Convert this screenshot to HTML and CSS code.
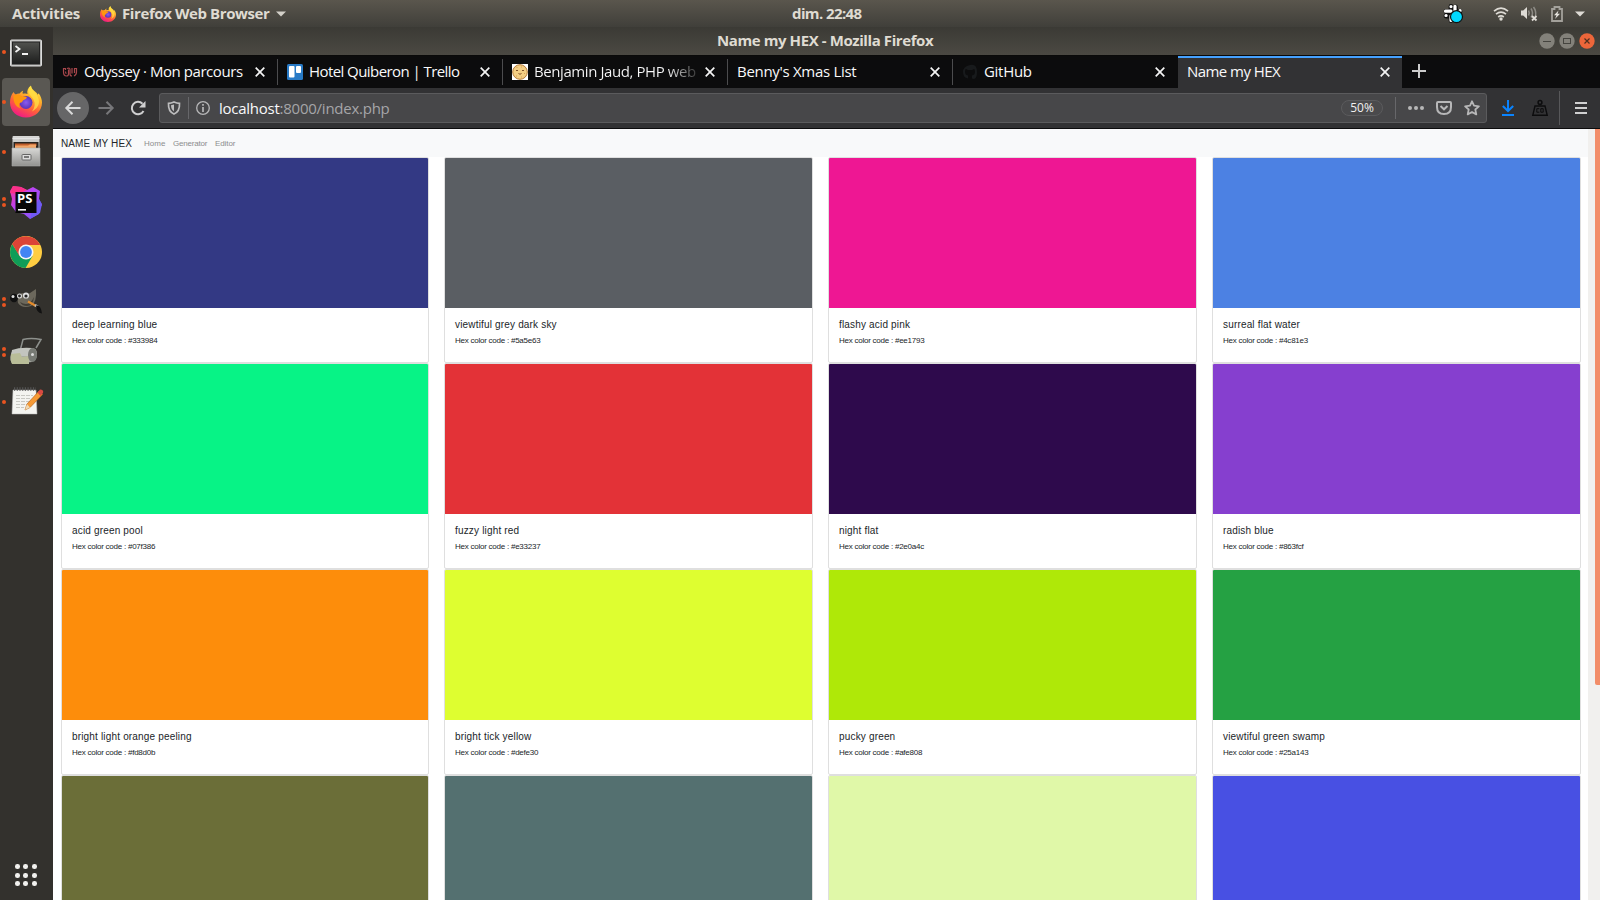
FILE: index.html
```html
<!DOCTYPE html>
<html lang="fr">
<head>
<meta charset="utf-8">
<title>Name my HEX</title>
<link rel="stylesheet" href="styles.css">
</head>
<body>
<svg class="defs" width="0" height="0">
  <defs>
    <linearGradient id="flame" x1="0.8" y1="0" x2="0.3" y2="1"><stop offset="0" stop-color="#fff44f"/><stop offset=".35" stop-color="#ffb02a"/><stop offset=".65" stop-color="#ff5f3a"/><stop offset="1" stop-color="#f0168a"/></linearGradient>
    <radialGradient id="globe"><stop offset="0" stop-color="#8a5cf0"/><stop offset="1" stop-color="#5a34b8"/></radialGradient>
    <linearGradient id="metal" x1="0" y1="0" x2="0" y2="1"><stop offset="0" stop-color="#d8d8d6"/><stop offset="1" stop-color="#92928f"/></linearGradient>
    <linearGradient id="screen" x1="0" y1="0" x2="0" y2="1"><stop offset="0" stop-color="#51524f"/><stop offset="1" stop-color="#1d1e1d"/></linearGradient>
    <linearGradient id="storm" x1="0" y1="0" x2="1" y2="1"><stop offset="0" stop-color="#ff318c"/><stop offset=".4" stop-color="#b845f5"/><stop offset="1" stop-color="#765af8"/></linearGradient>
    <symbol id="firefox" viewBox="0 0 32 32">
      <path fill="url(#flame)" d="M3.500 6.500c.6 1 1.300 2 2.400 2.500 1-.6 2.300-1 3.800-.9 1-1.800 2.300-2.600 3.500-2.900-.8 1.500-.7 2.300-.3 3.100 2.100-.5 3.800-.3 4.600.2-.9-3.200.5-6.200 3.500-8.500.3 2.900 2 4.300 4 6.100 1.300 1 2.300 2.100 2.800 3.200l.8-1.500c2.300 3 3.400 6.300 3.400 9.200 0 8.400-6.800 15-16 15S0 25.400 0 17c0-4.200 1.200-7.800 3.500-10.500z"/>
      <circle cx="16" cy="17" r="6.500" fill="url(#globe)"/>
      <path fill="#ff980e" d="M3.500 10c3-1.500 6-1.200 8 .6l4.500.6c1 .2.800 1.400.2 1.900-1.200 1-3 1.300-3.600 2.500-.3 1.800-2.400 1.300-3.200 2.300-.8 1.700.2 3.700 1.800 5C6 22 3 17 3.500 10z"/>
      <path fill="#ffe047" d="M21 1c.5 5 8 7.500 8 15 0 5-3.500 8-7 10 3-4 3.500-8 1.500-12-2-3.500-5-5-5-8.500C18.500 3.500 19.500 2 21 1z" opacity=".75"/>
    </symbol>
    <symbol id="x" viewBox="0 0 10 10"><path d="M.7.7l8.600 8.600M9.300.7L.7 9.300" fill="none" stroke="#f4f4f4" stroke-width="1.700"/></symbol>
  </defs>
</svg>

<header class="topbar">
  <span class="activities">Activities</span>
  <svg class="top-ff" width="16" height="16"><use href="#firefox"/></svg>
  <span class="appname">Firefox Web Browser</span>
  <svg class="caret" width="10" height="6"><path d="M0 .5h10l-5 5z" fill="#d3d0c9"/></svg>
  <span class="clock">dim. 22:48</span>
  <div class="tray">
    <svg class="slack" width="21" height="20" viewBox="0 0 21 20">
      <g stroke="#111" stroke-width="4.800" stroke-linecap="round"><path d="M8 2.500v4M12.500 3v4M3 7.500h4.500M3 12h4M13 7.500h4M8 12v4.500"/></g>
      <g stroke="#fff" stroke-width="3.200" stroke-linecap="round"><path d="M8 2.500v.1M12 2.300v5M2.500 7.200h5.500M3 11.500h.1M17 6.700h.1M8 12v4.500M12 12v1"/></g>
      <circle cx="13.500" cy="12.700" r="6" fill="#00d8ff" stroke="#111" stroke-width="1.200"/>
    </svg>
    <svg class="wifi" width="16" height="14" viewBox="0 0 16 14"><g fill="none" stroke="#dedbd5" stroke-width="1.700"><path d="M1 4.200q7-6 14 0" /><path d="M3 7.200q5-4.200 10 0"/><path d="M5.200 10q2.800-2.300 5.600 0"/></g><circle cx="8" cy="12" r="1.700" fill="#dedbd5"/></svg>
    <svg class="sound" width="18" height="15" viewBox="0 0 18 15"><path d="M1 4.500h2.200L7 1v12L3.200 9.500H1z" fill="#dedbd5"/><path d="M8.500 4.500q1.500 2.500 0 5M11 2.500q3 4.500 0 9M13.500 1q3 4 2 9" fill="none" stroke="#8d8b85" stroke-width="1.500"/><path d="M12 10l4.500 4.500M16.500 10L12 14.500" stroke="#dedbd5" stroke-width="1.800"/></svg>
    <svg class="battery" width="12" height="16" viewBox="0 0 12 16"><path d="M1 3h2.500V1h5v2H11v12H1z" fill="none" stroke="#a3a19b" stroke-width="1.800"/><path d="M7.500 4.500L3 9.200h2.500L4 13l5-5.200H6.500z" fill="#e5e3dd"/></svg>
    <svg class="caret2" width="10" height="6"><path d="M0 .5h10l-5 5z" fill="#dedbd5"/></svg>
  </div>
</header>

<div class="desktop">
<aside class="dock">
  <div class="app"><i class="run"></i>
    <svg width="34" height="32" viewBox="0 1 34 32"><rect x="1.500" y="5" width="31" height="26" rx="1" fill="#b5b5b3" stroke="#dcdcdc" stroke-width="1"/><rect x="3.500" y="7" width="27" height="22" fill="url(#screen)" stroke="#222"/><path d="M6.500 11l4 3-4 3M13 19h6" fill="none" stroke="#f2f2f2" stroke-width="1.800"/></svg>
  </div>
  <div class="app active"><i class="run"></i><svg class="up" width="32" height="33"><use href="#firefox"/></svg></div>
  <div class="app"><i class="run"></i>
    <svg class="up" width="32" height="34" viewBox="1 0 32 34"><path d="M3.500 3q0-1 1-1h25q1 0 1 1v29h-27z" fill="url(#metal)"/><path d="M3.500 4.500h27" stroke="#e4e4e4"/><path d="M4.500 8h25v8h-25z" fill="#292521"/><path d="M6 9.500h21.500V12H6z" fill="#c25f2c"/><path d="M6 11.500h13l2-1h6V14H6z" fill="#f1a568"/><path d="M3 14h28v18H3z" fill="url(#metal)" stroke="#aaa" stroke-width=".6"/><rect x="13" y="20.500" width="9" height="5.500" rx=".8" fill="#ddd" stroke="#666"/><rect x="15" y="22" width="5" height="2" fill="#777"/></svg>
  </div>
  <div class="app"><i class="run two"></i>
    <svg width="34" height="36" viewBox="0 0 34 36"><path d="M4 2l8 1 6 3 6-3 7 4-1 8 3 6-3 4v5l-9 5-6-5-8-2-5-7 1-6-2-8z" fill="url(#storm)"/><path d="M4 2l8 1 6 3-9 4-8-1z" fill="#fb3188"/><path d="M30 15l3 5-2 9-10 6 2-8z" fill="#6f5af5"/><rect x="6.500" y="8" width="21" height="21" fill="#080808"/><path d="M9 25.800h8" stroke="#fff" stroke-width="1.600"/><text class="ps" x="8" y="19">PS</text></svg>
  </div>
  <div class="app">
    <svg width="32" height="32" viewBox="0 0 32 32"><circle cx="16" cy="16" r="16" fill="#ffcd41"/><path d="M2.200 8A16 16 0 0 0 15.600 32L22.500 20 16 16l-6.500 3.500z" fill="#0f9d58"/><path d="M2.200 8l7.300 12L16 9h14.200A16 16 0 0 0 2.200 8z" fill="#dc4437"/><circle cx="16" cy="16" r="7.500" fill="#f5f5f5"/><circle cx="16" cy="16" r="5.900" fill="#4285f4"/></svg>
  </div>
  <div class="app"><i class="run two"></i>
    <svg width="34" height="30" viewBox="1 0 34 30"><path d="M9 9l5-3 5 2 9-6q1 14-5 17-9 3-13-3z" fill="#6c685c"/><path d="M12 15q9 6 14-5-1 9-7 9-5 0-7-4z" fill="#413e36"/><ellipse cx="6" cy="11" rx="4" ry="4.300" fill="#111"/><circle cx="5" cy="9.500" r="1.500" fill="#dcdcdc"/><circle cx="11.500" cy="9" r="2.500" fill="#dedede"/><circle cx="18" cy="8.500" r="3.100" fill="#dedede"/><circle cx="11.500" cy="9" r="1.400" fill="#222"/><circle cx="18" cy="9" r="1.600" fill="#222"/><path d="M20 14.500l8 4.500" stroke="#e58b2b" stroke-width="2.200"/><path d="M27 18l3 2" stroke="#bbb" stroke-width="2.500"/><path d="M28 18.500q5-1 6 8-6-1-6-8z" fill="#121212"/></svg>
  </div>
  <div class="app"><i class="run two"></i>
    <svg width="34" height="30" viewBox="0 0 34 30"><path d="M11 14l3-11.500q8-2 18 0L27 11" fill="none" stroke="#8d908c" stroke-width="1.500"/><path d="M2 17q1-4 5-4l16-2q5 0 5 6t-5 8l-19 2q-4-3-2-10z" fill="#a9aba6"/><path d="M3 13q8-3 20-2-4 3-4 8L2 19z" fill="#c3c5bf"/><path d="M2 17l9-1 2 4 7-1v8H3q-2-3-1-10z" fill="#b9bd98"/><ellipse cx="23.500" cy="18" rx="4.500" ry="7" fill="#777a74"/><circle cx="23.500" cy="17.500" r="1.500" fill="#ddd"/></svg>
  </div>
  <div class="app"><i class="run"></i>
    <svg class="up" width="34" height="30" viewBox="0 0 34 30"><path d="M4 4h23l1 24H3z" fill="#f4f4f0" stroke="#bbb" stroke-width=".5"/><path d="M5 3h22" stroke="#555" stroke-width="3.500" stroke-dasharray="1.200 1.500"/><path d="M7 9.500h17M7 12.500h14M7 15.500h15M7 18.500h11M7 21.500h8" stroke="#c8c8c2" stroke-width="1" stroke-dasharray="4 1"/><path d="M16 24l2-6L30 5l3.500 3.500L21 21.500z" fill="#f69a35" stroke="#ba661b" stroke-width=".7"/><path d="M16 24l2-6 3 3.500z" fill="#efdab4"/><path d="M28.500 6.500l2.500-3q4 0 3 3.500l-2.500 3z" fill="#d94a42"/></svg>
  </div>
  <div class="allapps"><i></i><i></i><i></i><i></i><i></i><i></i><i></i><i></i><i></i></div>
</aside>

<main class="window">
  <div class="titlebar"><span class="wintitle">Name my HEX - Mozilla Firefox</span>
    <div class="winbtns">
      <svg width="16" height="16"><circle cx="8" cy="8" r="7.700" fill="#83817a"/><path d="M4 8.500h8" stroke="#45443f"/></svg>
      <svg width="16" height="16"><circle cx="8" cy="8" r="7.700" fill="#83817a"/><rect x="4.500" y="5.500" width="7" height="5" fill="none" stroke="#45443f"/></svg>
      <svg width="16" height="16"><circle cx="8" cy="8" r="7.700" fill="#ed663a"/><path d="M5.500 5.500l5 5M10.500 5.500l-5 5" stroke="#51301f" stroke-width="1.200"/></svg>
    </div>
  </div>
  <div class="tabs">
    <div class="tab"><svg class="fav" width="16" height="16" viewBox="0 0 16 16"><path d="M3.500 6V4.500H1.500V8q0 4 3 4 2 0 2-2V5.500M5 4.500q3-1 3 1V10q0 2 2 2M10 4v5.500M12 12q2.500-1 2.500-4V4.500h-2V9M3.500 7.500q0 2 1 2" fill="none" stroke="#a8474c" stroke-width="1.200"/></svg><span class="t1">Odyssey · Mon parcours</span><svg class="close" width="10" height="10"><use href="#x"/></svg></div>
    <div class="tab"><svg class="fav" width="16" height="16"><rect width="16" height="16" rx="1.500" fill="#287ac6"/><rect x="2" y="2" width="5.500" height="11.500" rx="1" fill="#fff"/><rect x="9" y="2" width="5" height="7" rx="1" fill="#fff"/></svg><span class="t2">Hotel Quiberon | Trello</span><svg class="close" width="10" height="10"><use href="#x"/></svg></div>
    <div class="tab"><svg class="fav" width="16" height="16"><path fill="#fff" d="M0 0h16v16H0z"/><circle cx="8" cy="8" r="7.300" fill="#f4ce83" stroke="#b67b38"/><path d="M4 6.500h2M10 6.500h2M6.500 9.500q1.500 1.500 3 0" stroke="#805026" fill="none"/><path d="M4.500 3.500h1M9 3h1M12 9.500h1M4 12h1M9 13h1" stroke="#d8a254"/></svg><span class="t3 fade">Benjamin Jaud, PHP web</span><svg class="close" width="10" height="10"><use href="#x"/></svg></div>
    <div class="tab"><span class="t4">Benny's Xmas List</span><svg class="close" width="10" height="10"><use href="#x"/></svg></div>
    <div class="tab last"><svg class="fav" width="16" height="16"><path d="M6 14.500Q1 13.500 1 8t7-7 7 7-5 6.500v-3q3-.5 3-3.500 0-3-1-3l-2 1H6L4 5Q3 5 3 8t3 3.500z" fill="#181a1c"/></svg><span class="t5">GitHub</span><svg class="close" width="10" height="10"><use href="#x"/></svg></div>
    <div class="tab current"><span class="t6">Name my HEX</span><svg class="close" width="10" height="10"><use href="#x"/></svg></div>
    <svg class="plus" width="14" height="14"><path d="M7 0v14M0 7h14" stroke="#ccc" stroke-width="2"/></svg>
  </div>
  <div class="toolbar">
    <div class="back"><svg width="16" height="16" viewBox="0 0 16 16"><path d="M15.500 8H1.500M7.500 1.700L1.300 8l6.200 6.300" fill="none" stroke="#dadada" stroke-width="2"/></svg></div>
    <svg class="forward" width="16" height="16" viewBox="0 0 16 16"><path d="M.5 8h14M8.500 1.700L14.700 8l-6.200 6.300" fill="none" stroke="#77777a" stroke-width="2"/></svg>
    <svg class="reload" width="16" height="16" viewBox="0 0 16 16"><path d="M13.500 11A6.200 6.200 0 1 1 12.500 3.700" fill="none" stroke="#cfcfd0" stroke-width="2"/><path d="M15.500 1v6.500H9z" fill="#cfcfd0"/></svg>
    <div class="urlbar">
      <svg class="shield" width="14" height="14" viewBox="0 0 14 14"><path d="M7 1q3 1.300 5.500 1.300Q13 10.500 7 13 1 10.500 1.500 2.300 4 2.300 7 1z" fill="none" stroke="#bdbdbe" stroke-width="1.700"/><path d="M7 3.500v7Q4 8.500 4 4.300z" fill="#bdbdbe"/></svg>
      <i class="sep"></i>
      <svg class="info" width="14" height="14"><circle cx="7" cy="7" r="6.300" fill="none" stroke="#b7b7b8" stroke-width="1.300"/><path d="M7 6v5M7 3v1.800" stroke="#b7b7b8" stroke-width="1.700"/></svg>
      <span class="url"><b>localhost</b>:8000/index.php</span>
      <span class="zoom">50%</span>
      <i class="sep end"></i>
      <svg class="dots" width="16" height="4"><g fill="#b7b7b8"><circle cx="2" cy="2" r="2"/><circle cx="8" cy="2" r="2"/><circle cx="14" cy="2" r="2"/></g></svg>
      <svg class="pocket" width="16" height="14" viewBox="0 0 16 14"><path d="M2 1h12q1 0 1 1v4q0 7-7 7T1 6V2q0-1 1-1z" fill="none" stroke="#b7b7b8" stroke-width="2"/><path d="M4.500 5L8 8.300 11.500 5" fill="none" stroke="#b7b7b8" stroke-width="2"/></svg>
      <svg class="star" width="16" height="16" viewBox="0 0 16 16"><path d="M8 1.300l2 4.400 4.900.6-3.600 3.200 1 4.900L8 12l-4.300 2.400 1-4.900L1.100 6.300 6 5.700z" fill="none" stroke="#b7b7b8" stroke-width="1.800" stroke-linejoin="round"/></svg>
    </div>
    <svg class="download" width="12" height="16"><path d="M6 0v11M.8 6L6 11l5.200-5M0 15h12" fill="none" stroke="#0a84ff" stroke-width="2"/></svg>
    <svg class="weight" width="16" height="16" viewBox="0 0 16 16"><circle cx="8" cy="2.500" r="1.900" fill="none" stroke="#0c0c0d" stroke-width="1.500"/><path d="M3 6h10l2.200 9.200H.8z" fill="none" stroke="#0c0c0d" stroke-width="1.400"/><path d="M7.300 8.700H4.800v3.500h2.500M8.800 8.700h2.400v3.500H8.800z" fill="none" stroke="#0c0c0d"/></svg>
    <i class="vline"></i>
    <svg class="menu" width="12" height="12"><path d="M0 1h12M0 6h12M0 11h12" stroke="#d0d0d0" stroke-width="2"/></svg>
  </div>
  <div class="viewport">
    <div class="page">
      <nav class="sitenav"><span class="brand">NAME MY HEX</span><a class="n1">Home</a><a class="n2">Generator</a><a class="n3">Editor</a></nav>
      <section class="grid">
        <article class="card"><div class="swatch c1"></div><div class="body"><h5>deep learning blue</h5><p>Hex color code : #333984</p></div></article>
        <article class="card"><div class="swatch c2"></div><div class="body"><h5>viewtiful grey dark sky</h5><p>Hex color code : #5a5e63</p></div></article>
        <article class="card"><div class="swatch c3"></div><div class="body"><h5>flashy acid pink</h5><p>Hex color code : #ee1793</p></div></article>
        <article class="card"><div class="swatch c4"></div><div class="body"><h5>surreal flat water</h5><p>Hex color code : #4c81e3</p></div></article>
        <article class="card"><div class="swatch c5"></div><div class="body"><h5>acid green pool</h5><p>Hex color code : #07f386</p></div></article>
        <article class="card"><div class="swatch c6"></div><div class="body"><h5>fuzzy light red</h5><p>Hex color code : #e33237</p></div></article>
        <article class="card"><div class="swatch c7"></div><div class="body"><h5>night flat</h5><p>Hex color code : #2e0a4c</p></div></article>
        <article class="card"><div class="swatch c8"></div><div class="body"><h5>radish blue</h5><p>Hex color code : #863fcf</p></div></article>
        <article class="card"><div class="swatch c9"></div><div class="body"><h5>bright light orange peeling</h5><p>Hex color code : #fd8d0b</p></div></article>
        <article class="card"><div class="swatch c10"></div><div class="body"><h5>bright tick yellow</h5><p>Hex color code : #defe30</p></div></article>
        <article class="card"><div class="swatch c11"></div><div class="body"><h5>pucky green</h5><p>Hex color code : #afe808</p></div></article>
        <article class="card"><div class="swatch c12"></div><div class="body"><h5>viewtiful green swamp</h5><p>Hex color code : #25a143</p></div></article>
        <article class="card"><div class="swatch c13"></div></article>
        <article class="card"><div class="swatch c14"></div></article>
        <article class="card"><div class="swatch c15"></div></article>
        <article class="card"><div class="swatch c16"></div></article>
      </section>
    </div>
    <div class="scrollbar"><div class="thumb"></div></div>
  </div>
</main>
</div>
</body>
</html>
```
FILE: styles.css
```css
* { box-sizing: border-box; }
body { margin: 0; width: 1600px; height: 900px; overflow: hidden; display: flex; flex-direction: column; font-family: "Open Sans", "Noto Sans", sans-serif; font-size: 15px; }
.defs { position: absolute; }
svg { display: block; flex: none; overflow: visible; }
span, a { white-space: nowrap; flex: none; }

.topbar { height: 27px; flex: none; display: flex; align-items: center; background: linear-gradient(#5a564d, #403f3a); color: #dfdbd2; font-weight: 700; line-height: 27px; }
.activities { width: 88px; padding-left: 12px; letter-spacing: -.15px; }
.top-ff { margin: 0 6px 0 12px; }
.appname { width: 154px; letter-spacing: -.4px; }
.clock { margin-left: 506px; width: 72px; letter-spacing: -.6px; }
.tray { margin-left: 579px; display: flex; align-items: center; }
.wifi { margin-left: 29px; }
.sound { margin-left: 11px; }
.battery { margin-left: 13px; }
.caret2 { margin-left: 12px; }

.desktop { flex: 1; display: flex; min-height: 0; }
.dock { width: 53px; background: #33312d; padding: 1px 2px 0; display: flex; flex-direction: column; gap: 2px; }
.app { position: relative; height: 48px; width: 48px; flex: none; border-radius: 4px; display: flex; align-items: center; justify-content: center; }
.app .up { margin-bottom: 2px; }
.active { background: #5a5853; }
.run { position: absolute; left: 0; top: 22px; width: 4px; height: 4px; border-radius: 50%; background: #e95420; }
.two { top: 19px; box-shadow: 0 6px #e95420; }
.ps { font: bold 13px "Open Sans", sans-serif; fill: #fff; }
.allapps { margin: auto 0 14px 13px; display: grid; grid-template-columns: repeat(3, 4.600px); gap: 3.900px; }
.allapps i { height: 4.600px; border-radius: 50%; background: #f2f1ef; }

.window { flex: 1; display: flex; flex-direction: column; min-width: 0; }
.titlebar { height: 28px; flex: none; background: linear-gradient(#3b3a35, #4b4943); color: #dfdbd2; font-weight: 700; display: flex; align-items: center; line-height: 26px; }
.wintitle { margin-left: 664px; height: 28px; letter-spacing: -.41px; }
.winbtns { margin-left: auto; padding-right: 5px; display: flex; gap: 4px; }
.tabs { height: 33px; flex: none; background: #0c0c0d; color: #f9f9fa; display: flex; border-top: 1px solid #0a0a0a; }
.tab { width: 225px; flex: none; display: flex; align-items: center; padding: 0 12px 0 9px; border-right: 1px solid transparent; border-image: linear-gradient(transparent 4px, #4c4c4e 4px, #4c4c4e 28px, transparent 28px) 1; }
.tab span { height: 32px; line-height: 30px; }
.tab.last { border-image: none; }
.tab.current { border: 0; width: 224px; background: #323234; box-shadow: inset 0 2px #45a1ff; }
.fav { margin-right: 6px; }
.t1 { letter-spacing: -.44px; }
.t2 { letter-spacing: -.57px; }
.t3 { letter-spacing: -.42px; }
.t4, .t5 { letter-spacing: -.3px; }
.t6 { letter-spacing: -.55px; }
.close { margin-left: auto; }
.tab .fade { background: linear-gradient(90deg, #f9f9fa 82%, #3a3a3a 100%); background-clip: text; -webkit-background-clip: text; color: transparent; }
.plus { margin: 8px 0 0 10px; }

.toolbar { height: 41px; flex: none; background: #323234; border-bottom: 1px solid #0c0c0d; display: flex; align-items: center; }
.back { margin-left: 4px; width: 32px; height: 32px; border-radius: 50%; background: #666667; display: flex; align-items: center; justify-content: center; }
.forward { margin-left: 9px; }
.reload { margin-left: 16px; }
.urlbar { margin-left: 13px; width: 1328px; height: 30px; background: #474749; border: 1px solid #5b5b5d; border-radius: 3px; display: flex; align-items: center; }
.shield { margin-left: 7px; }
.sep { width: 1px; height: 22px; background: #67676a; margin: 0 7px; }
.url { margin-left: 9px; color: #a5a5a8; line-height: 28px; letter-spacing: -.25px; }
.url b { font-weight: 400; color: #f9f9fa; }
.zoom { margin-left: auto; width: 42px; height: 16px; border-radius: 8px; background: #4a4a4c; border: 1px solid #5b5b5d; color: #f0f0f0; font-size: 12px; line-height: 14px; text-align: center; }
.sep.end { margin: 0 12px 0 12px; }
.pocket { margin-left: 12px; }
.star { margin: 0 6px 0 12px; }
.download { margin-left: 15px; }
.weight { margin-left: 18px; }
.vline { width: 1px; height: 34px; background: #58585a; margin: 0 15px 0 11px; }

.viewport { flex: 1; display: flex; min-height: 0; overflow: hidden; background: #fff; font-family: "Liberation Sans", Arial, sans-serif; }
.page { width: 1535px; }
.sitenav { height: 28px; background: #f8f9fa; display: flex; align-items: center; padding-left: 8px; font-size: 8px; color: #8c8d8e; }
.brand { font-size: 10px; color: #212529; width: 83px; letter-spacing: .1px; }
.n1 { width: 29px; }
.n2 { width: 42px; letter-spacing: -.2px; }
.n3 { letter-spacing: -.1px; }
.grid { display: grid; grid-template-columns: 368px 369px 369px 369px; column-gap: 15px; padding-left: 8px; }
.card { height: 206px; border: 1px solid #dfdfdf; border-radius: 2px; background: #fff; }
.swatch { height: 150px; border-radius: 1px 1px 0 0; }
.body { padding: 11px 10px; }
.body h5 { margin: 0; font-size: 10px; font-weight: 400; line-height: 12px; color: #212529; letter-spacing: .17px; }
.body p { margin: 4px 0 0; font-size: 8px; line-height: 12px; color: #212529; letter-spacing: -.24px; }
.scrollbar { width: 12px; background: #f1f0ee; padding-left: 7px; }
.thumb { height: 556px; background: #f28d68; border-radius: 0 0 0 2px; }
.c1 { background: #333984; }
.c2 { background: #5a5e63; }
.c3 { background: #ee1793; }
.c4 { background: #4c81e3; }
.c5 { background: #07f386; }
.c6 { background: #e33237; }
.c7 { background: #2e0a4c; }
.c8 { background: #863fcf; }
.c9 { background: #fd8d0b; }
.c10 { background: #defe30; }
.c11 { background: #afe808; }
.c12 { background: #25a143; }
.c13 { background: #6b6e38; }
.c14 { background: #547070; }
.c15 { background: #e0f8a8; }
.c16 { background: #4850e3; }
```
